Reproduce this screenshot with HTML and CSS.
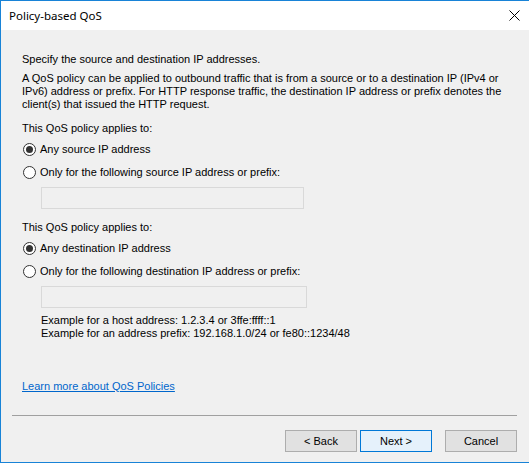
FILE: index.html
```html
<!DOCTYPE html>
<html>
<head>
<meta charset="utf-8">
<link rel="stylesheet" href="styles.css">
</head>
<body>
<div class="window">
  <div class="titlebar">
    <span class="title">Policy-based QoS</span>
    <span class="close">
      <svg width="11" height="11" viewBox="0 0 11 11"><path d="M0.5 0.5 L10.5 10.5 M10.5 0.5 L0.5 10.5" stroke="#000" stroke-width="1" fill="none"/></svg>
    </span>
  </div>
  <div class="content">
    <div class="main">
      <p class="line intro">Specify the source and destination IP addresses.</p>
      <p class="line para">A QoS policy can be applied to outbound traffic that is from a source or to a destination IP (IPv4 or<br>IPv6) address or prefix. For HTTP response traffic, the destination IP address or prefix denotes the<br>client(s) that issued the HTTP request.</p>

      <div class="group">
        <p class="line label">This QoS policy applies to:</p>
        <div class="radio-row first"><span class="radio checked"></span><span>Any source IP address</span></div>
        <div class="radio-row"><span class="radio"></span><span>Only for the following source IP address or prefix:</span></div>
        <div class="input"></div>
      </div>

      <div class="group">
        <p class="line label">This QoS policy applies to:</p>
        <div class="radio-row first"><span class="radio checked"></span><span>Any destination IP address</span></div>
        <div class="radio-row"><span class="radio"></span><span>Only for the following destination IP address or prefix:</span></div>
        <div class="input wide"></div>
        <p class="line example">Example for a host address: 1.2.3.4 or 3ffe:ffff::1<br>Example for an address prefix: 192.168.1.0/24 or fe80::1234/48</p>
      </div>

      <a class="link" href="#">Learn more about QoS Policies</a>
    </div>
    <div class="footer">
      <div class="separator"></div>
      <div class="buttons">
        <button class="btn">&lt; Back</button>
        <button class="btn default">Next &gt;</button>
        <button class="btn cancel">Cancel</button>
      </div>
    </div>
  </div>
</div>
</body>
</html>
```

FILE: styles.css
```css
* { box-sizing: border-box; }
html, body { margin: 0; padding: 0; background: #f0f0f0; }
body { font-family: "Liberation Sans", Arial, sans-serif; font-size: 11px; color: #000; }

.window {
  width: 529px;
  height: 463px;
  border-top: 1px solid #1883d7;
  border-left: 1px solid #1883d7;
  border-bottom: 1px solid #1883d7;
  display: flex;
  flex-direction: column;
  background: #f0f0f0;
}

.titlebar {
  height: 29px;
  background: #fff;
  display: flex;
  align-items: center;
  justify-content: space-between;
  padding-left: 8px;
  padding-right: 9px;
  flex: none;
}
.title { font-family: "Noto Sans", "Open Sans", sans-serif; font-size: 11.5px; line-height: 16px; }
.close { display: flex; width: 11px; height: 11px; }

.content {
  flex: 1;
  display: flex;
  flex-direction: column;
  padding-left: 21px;
}

.main { display: flex; flex-direction: column; align-items: flex-start; padding-top: 23px; }

.line { margin: 0; line-height: 13px; white-space: nowrap; }
.para { margin-top: 6px; }
.group { display: flex; flex-direction: column; align-items: flex-start; margin-top: 11px; }
.group + .group { margin-top: 12px; }

.radio-row { display: flex; align-items: center; gap: 4px; height: 16px; margin-top: 7px; white-space: nowrap; }
.radio-row.first { margin-top: 6px; }
.radio {
  width: 13px; height: 13px; border-radius: 50%;
  border: 1px solid #333; background: #fff;
  display: flex; align-items: center; justify-content: center;
  margin-left: 1px;
}
.radio.checked::after {
  content: ""; width: 7px; height: 7px; border-radius: 50%; background: #333;
}

.input {
  width: 263px; height: 22px;
  margin-top: 7px; margin-left: 19px;
  border: 1px solid #d9d9d9;
  background: #f0f0f0;
}
.input.wide { width: 266px; }

.example { margin-top: 6px; margin-left: 19px; }

.link {
  margin-top: 40px;
  line-height: 13px;
  color: #0066cc;
  text-decoration: underline;
  white-space: nowrap;
}

.footer { margin-top: auto; margin-left: -10px; padding-right: 12px; padding-bottom: 10px; }
.separator { height: 1px; background: #a0a0a0; margin-bottom: 14px; }
.buttons { display: flex; justify-content: flex-end; }
.btn {
  width: 72px; height: 22px;
  font-family: inherit; font-size: 11px; color: #000;
  background: #e1e1e1; border: 1px solid #adadad;
  padding: 0; margin: 0;
}
.btn + .btn { margin-left: 3px; }
.btn.default { background: #e5f1fb; border-color: #0078d7; }
.btn.cancel { margin-left: 13px; }
```
